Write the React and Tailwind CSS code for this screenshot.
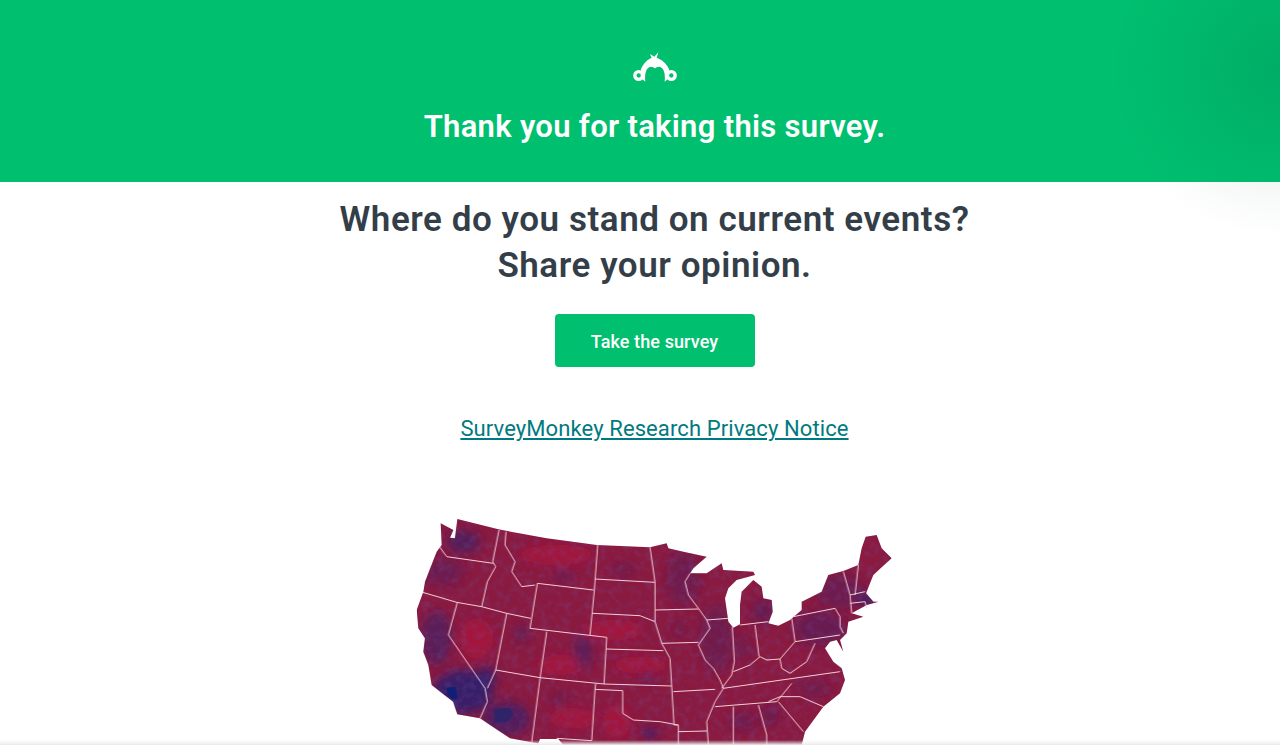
const outline =
  'M122,55 L160,75 L150,98 L165,100 L172,42 L295,73 L440,100 L590,120 L750,127 L800,115 L805,130 L850,140 L920,155 L880,190 L870,205 L920,205 L965,175 L970,195 L1060,200 L1065,210 L1010,225 L985,250 L975,280 L985,350 L1000,368 L1020,358 L1020,300 L1025,260 L1060,225 L1085,245 L1090,280 L1115,285 L1118,320 L1105,355 L1135,362 L1170,345 L1205,315 L1205,290 L1265,260 L1285,210 L1330,198 L1375,180 L1385,130 L1397,95 L1430,90 L1445,130 L1475,160 L1450,182 L1420,210 L1408,240 L1398,265 L1420,290 L1435,290 L1400,300 L1355,325 L1390,335 L1345,350 L1340,385 L1320,405 L1330,440 L1310,405 L1290,410 L1275,430 L1300,470 L1325,490 L1335,525 L1320,565 L1270,605 L1215,680 L1205,720 L490,720 L475,702 L420,702 L415,715 L395,712 L330,700 L240,640 L172,628 L160,590 L95,540 L85,480 L70,440 L75,400 L55,370 L50,315 L70,260 L75,230 L110,140 L125,120 Z';

const borders = [
  '118,125 140,155 210,165 280,175',
  '297,75 278,170 287,185 262,230 245,305',
  '318,80 315,120 345,170 335,200 365,245 405,240',
  '68,262 170,292 245,305 320,325 392,340',
  '172,292 145,390 255,550 262,590 240,640',
  '320,325 287,495 262,550',
  '412,235 580,255',
  '412,235 390,370 620,397',
  '593,120 583,255 570,390',
  '585,222 765,232',
  '750,127 765,232 765,350 785,415 810,460 815,543 822,660 835,660 835,720',
  '578,325 720,332 765,350',
  '620,397 612,537',
  '620,432 790,437',
  '765,315 895,312',
  '870,205 855,230 865,270 895,310 920,345 985,340',
  '785,415 895,412',
  '920,345 930,370 895,420 915,465 940,490 960,525 970,550 945,590 920,650 925,720',
  '440,380 420,520 395,712',
  '287,495 420,518 612,537 815,543',
  '587,537 585,553 668,557 668,625 700,645 780,650 835,660',
  '585,553 575,707 470,700',
  '820,560 945,553',
  '835,680 920,678',
  '997,365 1003,470 995,510 965,550',
  '1065,360 1077,455',
  '1020,360 1105,350',
  '1000,500 1050,480 1080,455 1100,465 1140,462 1145,490 1170,505 1220,470 1245,415',
  '970,550 1320,500',
  '945,605 1130,590 1175,535',
  '1175,340 1185,410 1140,462',
  '1180,335 1305,310 1320,335 1320,365 1330,385',
  '1185,410 1320,390',
  '1105,590 1140,575 1200,575 1270,605',
  '1135,590 1210,680',
  '1075,600 1100,690 1100,720',
  '1000,605 1000,720',
  '1330,200 1350,270 1355,325',
  '1375,180 1365,270',
  '1395,260 1350,270',
  '1350,295 1395,290 1400,310',
];

// darker, bluer patches on the map: cx, cy, rx, ry, opacity
const bluePatches = [
  [190, 110, 50, 35, 0.55],
  [130, 200, 60, 40, 0.3],
  [110, 400, 45, 80, 0.5],
  [190, 560, 90, 65, 0.85],
  [260, 515, 30, 30, 0.75],
  [320, 640, 70, 50, 0.6],
  [365, 385, 15, 25, 0.5],
  [550, 440, 25, 50, 0.5],
  [850, 220, 50, 80, 0.28],
  [950, 400, 50, 100, 0.24],
  [1090, 320, 35, 35, 0.35],
  [1260, 370, 80, 50, 0.34],
  [1320, 260, 70, 50, 0.3],
  [1400, 285, 25, 20, 0.8],
  [750, 685, 22, 18, 0.7],
  [1110, 630, 25, 25, 0.35],
  [1030, 650, 35, 25, 0.3],
  [480, 585, 25, 18, 0.3],
  [740, 515, 25, 18, 0.35],
  [840, 375, 18, 18, 0.3],
  [490, 210, 25, 18, 0.35],
  [670, 195, 30, 15, 0.3],
  [1240, 550, 50, 25, 0.25],
  [1030, 430, 25, 35, 0.25],
];

const redPatches = [
  [230, 400, 50, 60],
  [640, 375, 90, 30],
  [650, 650, 40, 50],
  [480, 480, 70, 30],
  [470, 150, 110, 30],
  [720, 480, 80, 25],
  [520, 640, 70, 30],
];

const MonkeyLogo = () => (
  <svg width="44" height="30" viewBox="99 38 132 90" fill="white">
    <path d="M122,92 C130,72 143,60 155,56 L150,44 L163,52 L175,39 L170,56 C184,60 200,72 208,92 L205,118 L194,127 C197,102 191,84 178,82 C171,82 168,85 165,87 C162,85 159,82 152,82 C139,84 133,102 136,127 L125,118 Z" />
    <path fillRule="evenodd" d="M116,92 A16.5,16.5 0 1 0 116,125 A16.5,16.5 0 1 0 116,92 Z M116,102 A6.5,6.5 0 1 1 116,115 A6.5,6.5 0 1 1 116,102 Z" />
    <path fillRule="evenodd" d="M214,92 A16.5,16.5 0 1 0 214,125 A16.5,16.5 0 1 0 214,92 Z M214,102 A6.5,6.5 0 1 1 214,115 A6.5,6.5 0 1 1 214,102 Z" />
  </svg>
);

const UsMap = () => (
  <svg width="510" height="240" viewBox="0 0 1530 720" className="block">
    <defs>
      <clipPath id="usClip">
        <path d={outline} />
      </clipPath>
      <filter id="soft" x="-30%" y="-30%" width="160%" height="160%">
        <feGaussianBlur stdDeviation="14" />
      </filter>
      <filter id="mottle" x="0" y="0" width="100%" height="100%">
        <feTurbulence type="fractalNoise" baseFrequency="0.045" numOctaves="3" seed="7" />
        <feColorMatrix values="0 0 0 0 0.18  0 0 0 0 0.1  0 0 0 0 0.42  1.8 0 0 0 -0.72" />
      </filter>
    </defs>
    <g clipPath="url(#usClip)">
      <rect width="1530" height="720" fill="#8a1a3f" />
      <g filter="url(#soft)">
        {redPatches.map(([cx, cy, rx, ry]) => (
          <ellipse key={`${cx}-${cy}`} cx={cx} cy={cy} rx={rx} ry={ry} fill="#b5183a" opacity="0.6" />
        ))}
        {bluePatches.map(([cx, cy, rx, ry, o]) => (
          <ellipse key={`${cx}-${cy}`} cx={cx} cy={cy} rx={rx} ry={ry} fill="#2b2070" opacity={o} />
        ))}
      </g>
      <rect width="1530" height="720" filter="url(#mottle)" opacity="0.3" />
      <polygon points="140,548 168,545 172,583 155,582 142,565" fill="#0f1f78" />
      <polygon points="282,612 330,608 340,632 318,652 285,652" fill="#2f2468" />
    </g>
    <g fill="none" stroke="#f6d0d8" strokeWidth="3" strokeLinejoin="round">
      {borders.map((points) => (
        <polyline key={points} points={points} />
      ))}
    </g>
  </svg>
);

const App = () => {
  return (
    <div className="relative h-[745px] overflow-hidden bg-white font-['Roboto',sans-serif]">
      <header className="flex h-[182px] flex-col items-center bg-[#00bf6f] pl-[29px] pt-[52px]">
        <MonkeyLogo />
        <h1 className="mt-[23px] text-[31px] leading-[44px] font-semibold tracking-[0.3px] text-white">
          Thank you for taking this survey.
        </h1>
      </header>
      <div className="pointer-events-none absolute -right-[170px] -top-[100px] h-[340px] w-[340px] rounded-full bg-[radial-gradient(circle,rgba(0,50,40,0.13)_0%,rgba(0,50,40,0.05)_40%,rgba(0,50,40,0)_70%)]" />
      <main className="flex flex-col items-center pl-[29px] text-center">
        <h2 className="mt-[15px] text-[35px] leading-[46px] font-semibold tracking-[0.55px] text-[#333e48]">
          Where do you stand on current events?
          <br />
          Share your opinion.
        </h2>
        <a className="mt-[25px] flex h-[53px] w-[200px] items-center justify-center rounded bg-[#00bf6f] pt-px text-[18px] font-medium tracking-[0.1px] text-white">
          Take the survey
        </a>
        <a className="mt-[47px] text-[22px] leading-[30px] tracking-[0.1px] text-[#007a80] underline">
          SurveyMonkey Research Privacy Notice
        </a>
        <div className="mt-[61px]">
          <UsMap />
        </div>
      </main>
      <div className="pointer-events-none absolute inset-x-0 bottom-0 h-[5px] bg-gradient-to-b from-transparent to-[#ececec]" />
    </div>
  );
};

export default App;
